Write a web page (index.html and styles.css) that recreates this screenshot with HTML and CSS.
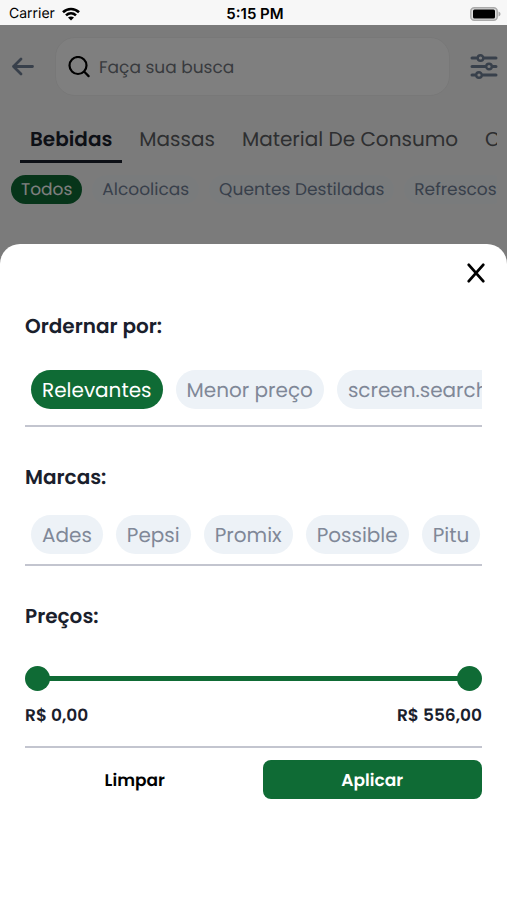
FILE: index.html
```html
<!DOCTYPE html>
<html lang="pt-BR">
<head>
<meta charset="utf-8">
<meta name="viewport" content="width=device-width, initial-scale=1">
<title>Busca</title>
<link rel="stylesheet" href="styles.css">
</head>
<body>
<header class="status">
  <span class="carrier">Carrier
    <svg width="18" height="14" viewBox="0 0 18 14" aria-hidden="true"><g fill="none" stroke="#000" stroke-width="2.6"><path d="M1 5.2C5.500.9 12.500.9 17 5.200"/><path d="M4 8.400c2.900-2.700 7.100-2.700 10 0"/></g><path d="M9 13.600 6 10.600c1.700-1.500 4.300-1.500 6 0z"/></svg>
  </span>
  <span class="clock">5:15 PM</span>
  <svg class="battery" width="31" height="14" viewBox="0 0 31 14" aria-hidden="true"><rect x=".8" y=".8" width="26.400" height="12.400" rx="3.500" fill="#ddd" stroke="#aaa" stroke-width="1.500"/><rect x="3" y="2.500" width="22" height="9" rx="1.500"/><path d="M28.500 4.500c2.700.8 2.700 4.200 0 5z" fill="#aaa"/></svg>
</header>
<main class="screen">
  <div class="topbar">
    <button class="icon" aria-label="Voltar"><svg width="24" height="20" viewBox="0 0 24 20" fill="none" stroke="#718096" stroke-width="2.800" stroke-linecap="round" stroke-linejoin="round"><path d="M21.500 9.500H2.500M10 2 2.500 9.500 10 17"/></svg></button>
    <label class="search">
      <svg width="22" height="22" viewBox="0 0 22 22" fill="none" stroke="#000" stroke-width="2.200" stroke-linecap="round" aria-hidden="true"><circle cx="10" cy="9.500" r="8.500"/><path d="m16.300 15.800 4.300 4.300"/></svg>
      <input type="text" placeholder="Faça sua busca" aria-label="Busca">
    </label>
    <button class="icon" aria-label="Filtros"><svg width="28" height="26" viewBox="0 0 28 26" fill="none" stroke="#718096" stroke-width="3" stroke-linecap="round"><path d="M2 4h4.500M14 4h12M2 12.500h13M23 12.500h3M2 21h3M13 21h13"/><g stroke-width="2.400"><circle cx="10.500" cy="4" r="2.800"/><circle cx="19" cy="12.500" r="2.800"/><circle cx="9" cy="21" r="2.800"/></g></svg></button>
  </div>
  <nav class="tabs">
    <a href="#" class="tab active">Bebidas</a>
    <a href="#" class="tab">Massas</a>
    <a href="#" class="tab">Material De Consumo</a>
    <a href="#" class="tab">C</a>
  </nav>
  <div class="subtabs">
    <button class="sub active">Todos</button>
    <button class="sub">Alcoolicas</button>
    <button class="sub">Quentes Destiladas</button>
    <button class="sub">Refrescos</button>
  </div>

  <div class="overlay">
    <section class="sheet" role="dialog" aria-label="Filtros">
      <button class="close" aria-label="Fechar"><svg width="18" height="20" viewBox="0 0 18 20" fill="none" stroke="#000" stroke-width="2.800" stroke-linecap="round"><path d="m1.800 1.800 14.400 16.400M16.200 1.800 1.800 18.200"/></svg></button>
      <div class="group order">
        <h2>Ordernar por:</h2>
        <div class="chips">
          <button class="chip active">Relevantes</button>
          <button class="chip">Menor preço</button>
          <button class="chip">screen.search</button>
        </div>
      </div>
      <div class="group brands">
        <h2>Marcas:</h2>
        <div class="chips">
          <button class="chip">Ades</button>
          <button class="chip">Pepsi</button>
          <button class="chip">Promix</button>
          <button class="chip">Possible</button>
          <button class="chip">Pitu</button>
        </div>
      </div>
      <div class="group prices">
        <h2>Preços:</h2>
        <div class="slider">
          <input type="range" min="0" max="556" value="0" aria-label="Preço mínimo">
          <input type="range" min="0" max="556" value="556" aria-label="Preço máximo">
        </div>
        <div class="values"><span>R$ 0,00</span><span>R$ 556,00</span></div>
      </div>
      <div class="actions">
        <button class="action">Limpar</button>
        <button class="action primary">Aplicar</button>
      </div>
    </section>
  </div>
</main>
</body>
</html>
```
FILE: styles.css
```css
* { box-sizing: border-box; }
body {
  margin: 0;
  min-height: 100vh;
  display: flex;
  flex-direction: column;
  font-family: Poppins, Inter, sans-serif;
  text-rendering: geometricPrecision;
  background: #f7f7f7;
  color: #1a202c;
}
button {
  border: 0;
  padding: 0;
  background: none;
  font: inherit;
  color: inherit;
  text-rendering: inherit;
  white-space: nowrap;
  flex: none;
}
svg { display: block; flex: none; }

.status {
  display: grid;
  grid-template-columns: 1fr auto 1fr;
  align-items: center;
  height: 25px;
  padding: 2px 6px 0 9px;
  font: 14px/20px Inter, sans-serif;
  color: #000;
}
.carrier { display: flex; align-items: center; gap: 7px; }
.clock { font-size: 15px; font-weight: 600; }
.battery { justify-self: end; }

.screen {
  position: relative;
  flex: 1;
  overflow: hidden;
}
.topbar {
  display: flex;
  align-items: center;
  gap: 20px;
  padding: 12px 9px 0 11px;
}
.search {
  flex: 1;
  min-width: 0;
  display: flex;
  align-items: center;
  gap: 9px;
  height: 59px;
  padding: 0 12px;
  border: 1px solid #f0f0f0;
  border-radius: 20px;
  background: #fff;
}
.search input {
  flex: 1;
  min-width: 0;
  border: 0;
  padding: 0;
  background: none;
  font: inherit;
  font-size: 17px;
  line-height: 24px;
  text-rendering: inherit;
}
.search input::placeholder { color: #71757c; opacity: 1; }

.tabs {
  display: flex;
  gap: 7px;
  margin: 23px 10px 0;
  padding-left: 10px;
  overflow: hidden;
}
.tab {
  flex: none;
  padding: 6px 10px 7px;
  border-bottom: 3px solid transparent;
  font-size: 20px;
  line-height: 28px;
  color: #5c5e62;
  text-decoration: none;
  white-space: nowrap;
}
.tab.active {
  color: #1a202c;
  font-weight: 600;
  border-color: #1a202c;
}
.subtabs {
  display: flex;
  gap: 10px;
  margin: 12px 10px 0 11px;
  overflow: hidden;
}
.sub {
  height: 29px;
  padding: 0 10px;
  border-radius: 15px;
  background: #f3f6f9;
  color: #718096;
  font-size: 17px;
  line-height: 29px;
}
.sub.active { background: #0f6b35; color: #fff; }

.overlay {
  position: absolute;
  inset: 0;
  display: flex;
  flex-direction: column;
  justify-content: flex-end;
  background: rgba(0, 0, 0, 0.5);
}
.sheet {
  display: flex;
  flex-direction: column;
  padding: 19px 25px 101px;
  border-radius: 20px 20px 0 0;
  background: #fff;
}
.close {
  align-self: flex-end;
  margin-right: -3px;
}
.group { border-bottom: 2px solid #c3c5cf; }
h2 {
  margin: 0;
  font-size: 20px;
  line-height: 28px;
  font-weight: 600;
}
.chips {
  display: flex;
  gap: 13px;
  padding-left: 6px;
  overflow: hidden;
}
.chip {
  height: 39px;
  padding: 0 11px;
  border-radius: 20px;
  background: #edf2f7;
  color: #808898;
  font-size: 20px;
  line-height: 38px;
}
.chip.active { background: #0f6b35; color: #fff; }
.order { padding: 29px 0 16px; }
.order .chips { margin-top: 30px; }
.brands { padding: 36px 0 10px; }
.brands .chips { margin-top: 24px; }
.prices { padding: 36px 0 19px; }

.slider {
  position: relative;
  height: 25px;
  margin-top: 36px;
  background: linear-gradient(#0f6b35, #0f6b35) center / calc(100% - 24px) 5px no-repeat;
}
.slider input {
  position: absolute;
  inset: 0;
  width: 100%;
  height: 25px;
  margin: 0;
  appearance: none;
  background: none;
  pointer-events: none;
}
.slider input::-webkit-slider-thumb {
  appearance: none;
  width: 25px;
  height: 25px;
  border-radius: 50%;
  background: #0f6b35;
  pointer-events: auto;
}
.values {
  display: flex;
  justify-content: space-between;
  margin-top: 12px;
  font-size: 17px;
  line-height: 24px;
  font-weight: 600;
}
.actions {
  display: grid;
  grid-template-columns: 1fr 1fr;
  gap: 18px;
  margin-top: 12px;
}
.action {
  height: 39px;
  border-radius: 8px;
  color: #000;
  font-size: 17px;
  font-weight: 600;
}
.action.primary { background: #0f6b35; color: #fff; }
```
